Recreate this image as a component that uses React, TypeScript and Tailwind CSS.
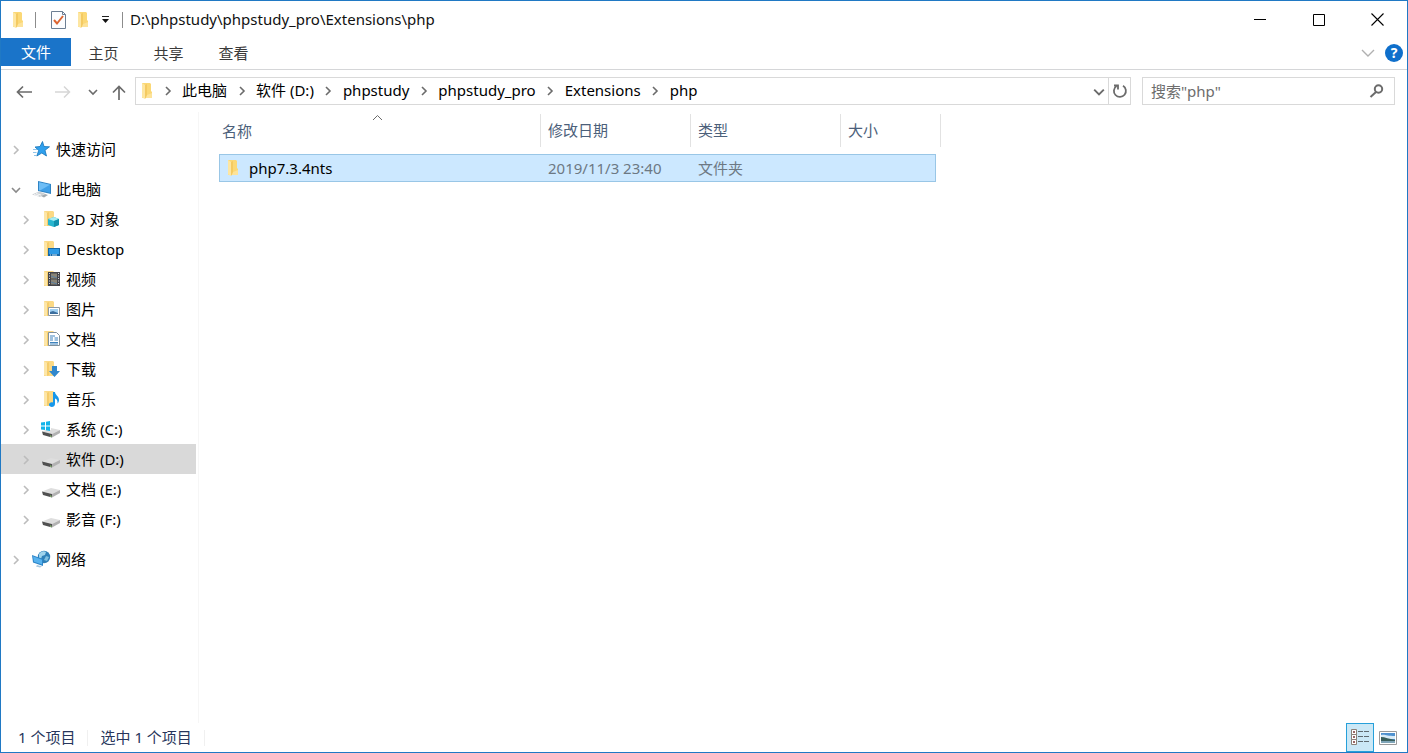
import { Fragment, useState } from "react";
import type { ReactNode } from "react";

type TreeItem = {
  id: string;
  label: string;
  icon: ReactNode;
  child?: boolean;
  open?: boolean;
  gapBefore?: boolean;
};

const Folder = () => (
  <svg width="12" height="16" viewBox="0 0 12 16" aria-hidden="true">
    <path d="M1 0h8l1 1v7l1 1v6H1z" fill="#fbd876" />
    <path d="M1 0l3 2v14l-3-1.500z" fill="#fde6a2" />
    <path d="M4 2l2-1v12l-2 3z" fill="#f4ca62" />
    <path d="M6 12l5-2v5H5z" fill="#fde39a" />
  </svg>
);

// Folder with a small picture over its lower right corner
const BadgeFolder = ({ children }: { children: ReactNode }) => (
  <svg width="18" height="18" viewBox="0 0 18 18" className="ml-0.5" aria-hidden="true">
    <path d="M1 1h9l1 1v14H1z" fill="#fbd985" />
    <path d="M1 1l3 2v13l-3-1z" fill="#fde6a8" />
    <path d="M4 3l2-1v13l-2 1z" fill="#f5cc6a" />
    {children}
  </svg>
);

const Chevron = ({ dir, color, size = 10 }: { dir: "right" | "down"; color: string; size?: number }) => {
  const paths = {
    right: "M3 1l4 4-4 4",
    down: "M1 3l4 4 4-4",
  };
  return (
    <svg width={size} height={size} viewBox="0 0 10 10" fill="none" stroke={color} strokeWidth="1.600" aria-hidden="true">
      <path d={paths[dir]} />
    </svg>
  );
};

const StarIcon = () => (
  <svg width="18" height="18" viewBox="0 0 18 18" className="ml-0.5" aria-hidden="true">
    <path d="M9.500 1.500l1.500 5 5.500.3-4.500 3.500 1.500 5.700-4.700-3-5 3 1.900-5.600L2 7l5-.5z" fill="#2fa0ee" stroke="#1673b8" strokeWidth=".8" />
    <path d="M0 9.500h4M0 12.500h3.500M1 15.500h2" stroke="#8ec4ea" strokeWidth="1" />
  </svg>
);

const ComputerIcon = () => (
  <svg width="20" height="18" viewBox="0 0 20 18" className="ml-px" aria-hidden="true">
    <path d="M6 1l13 3v10L6 11z" fill="#2e83c4" />
    <path d="M7 2.200l11 2.600v7.900L7 10.200z" fill="#3f9fe8" />
    <path d="M7 2.200l11 2.600L8 10.400l-1-.2z" fill="#6dbdf6" />
    <path d="M0 14.500l7-3 6 2-5 3.500z" fill="#ccd1d5" />
    <path d="M2 14.500l5 1.500M4 13.500l5 1.500" stroke="#fff" strokeWidth=".8" />
    <path d="M9 16l4-2 3 1-4 2.500z" fill="#a3abb1" />
  </svg>
);

const NetworkIcon = () => (
  <svg width="20" height="18" viewBox="0 0 20 18" aria-hidden="true">
    <circle cx="13" cy="7" r="6.200" fill="#2f80b8" />
    <path d="M8 4c2-3 5-3.500 7-2l-1 3-3 1-1 3-2-1z" fill="#9fd3ec" />
    <path d="M15 6l3 1-2 4-3-1z" fill="#7fbfe0" />
    <path d="M1 5l11 4v7L2 12.500z" fill="#2b84c8" />
    <path d="M2 6.300l9 3.400v4.900L3 11.700z" fill="#57b2ee" />
    <path d="M6 15l5 1.500-2 1-4-1z" fill="#a8c8de" />
  </svg>
);

const DriveIcon = ({ system }: { system?: boolean }) => (
  <svg width="20" height="18" viewBox="0 0 20 18" aria-hidden="true">
    <path d="M1 11.500l9-3.500 9 2-8 4z" fill="#dedede" />
    <path d="M1 11.500l10 2.500v3.500L2 15z" fill="#505050" />
    <path d="M11 14l8-4v3l-8 4.500z" fill="#b2b2b2" />
    <path d="M9 16l1.500.3" stroke="#9be37c" strokeWidth="1" />
    {system && (
      <>
        <path d="M0 1h10v9H0z" fill="#fff" />
        <path d="M0 2.500l4-.6v3.600H0zM5 1.700L9 1v4.500H5zM0 6.500h4v3.600l-4-.6zM5 6.500h4V11l-4-.7z" fill="#14b4ea" />
      </>
    )}
  </svg>
);

const ThreeDIcon = () => (
  <BadgeFolder>
    <path d="M5 9l6-2 5 2v6l-5 2-6-2z" fill="#27b5cf" />
    <path d="M5 9l6-2 5 2-5 2z" fill="#a8ecf3" />
    <path d="M11 11l5-2v6l-5 2z" fill="#1190ad" />
  </BadgeFolder>
);

const DesktopIcon = () => (
  <BadgeFolder>
    <path d="M5 8h12v8H5z" fill="#1769a8" />
    <path d="M6 9h10v5H6z" fill="#2d9ae6" />
    <path d="M7 15h1M9 15h5" stroke="#d5ecfb" />
  </BadgeFolder>
);

const VideoIcon = () => (
  <BadgeFolder>
    <path d="M5 2h12v14H5z" fill="#45454b" />
    <path d="M6.500 3v12M15.500 3v12" stroke="#d8d8d8" strokeWidth="1" strokeDasharray="1 1.500" />
    <path d="M8 3.500h6v5H8zM8 9.500h6v5H8z" fill="#8a8577" />
    <path d="M8 6l6 2M8 12l6 2" stroke="#5b7fa0" />
  </BadgeFolder>
);

const PictureIcon = () => (
  <BadgeFolder>
    <path d="M5.500 7.500h11v8h-11z" fill="#fff" stroke="#8f9aa3" />
    <path d="M7 9h8v5H7z" fill="#9fd0f2" />
    <path d="M7 12l3-1 5 2v1H7z" fill="#3c6e9e" />
  </BadgeFolder>
);

const DocumentIcon = () => (
  <BadgeFolder>
    <path d="M5.500 2.500h8l3 3v10h-11z" fill="#fff" stroke="#81919c" />
    <path d="M7 6h5M7 8h3M11.500 8H15M7 10h3M11.500 10H15M7 12.500h8M7 14h8" stroke="#3e83bd" />
  </BadgeFolder>
);

const DownloadIcon = () => (
  <BadgeFolder>
    <path d="M9 6h5v5h3l-5.500 6L6 11h3z" fill="#3187cc" />
  </BadgeFolder>
);

const MusicIcon = () => (
  <BadgeFolder>
    <path d="M10 2h2c0 3 4 4 4 8 0 1.500-.6 2.500-1.500 3.500.3-3-.8-4.500-2.500-5v5.500c0 4-6 3.500-6 .8 0-2 2-3 4-2.300z" fill="#1697ea" />
  </BadgeFolder>
);

const treeItems: TreeItem[] = [
  { id: "quick", label: "快速访问", icon: <StarIcon /> },
  { id: "pc", label: "此电脑", icon: <ComputerIcon />, open: true, gapBefore: true },
  { id: "3d", label: "3D 对象", icon: <ThreeDIcon />, child: true },
  { id: "desktop", label: "Desktop", icon: <DesktopIcon />, child: true },
  { id: "videos", label: "视频", icon: <VideoIcon />, child: true },
  { id: "pictures", label: "图片", icon: <PictureIcon />, child: true },
  { id: "documents", label: "文档", icon: <DocumentIcon />, child: true },
  { id: "downloads", label: "下载", icon: <DownloadIcon />, child: true },
  { id: "music", label: "音乐", icon: <MusicIcon />, child: true },
  { id: "c", label: "系统 (C:)", icon: <DriveIcon system />, child: true },
  { id: "d", label: "软件 (D:)", icon: <DriveIcon />, child: true },
  { id: "e", label: "文档 (E:)", icon: <DriveIcon />, child: true },
  { id: "f", label: "影音 (F:)", icon: <DriveIcon />, child: true },
  { id: "network", label: "网络", icon: <NetworkIcon />, gapBefore: true },
];

const crumbs = ["此电脑", "软件 (D:)", "phpstudy", "phpstudy_pro", "Extensions", "php"];

const TitleBar = () => (
  <header className="flex h-[37px] shrink-0 items-center">
    <div className="flex items-center pl-[11px]">
      <Folder />
      <span className="ml-[11px] h-4 w-px bg-[#8c8c8c]" />
      <button type="button" aria-label="属性" className="ml-[15px]">
        <svg width="15" height="18" viewBox="0 0 15 18" aria-hidden="true">
          <path d="M.5.500h11l3 3v14H.5z" fill="#fcfdff" stroke="#6d7f94" />
          <path d="M11.500.500v3h3" fill="none" stroke="#6d7f94" />
          <path d="M3 9l3 3.500L12 5" fill="none" stroke="#dc6532" strokeWidth="2" />
        </svg>
      </button>
      <button type="button" aria-label="新建文件夹" className="ml-[11px]">
        <Folder />
      </button>
      <button type="button" aria-label="自定义快速访问工具栏" className="ml-3">
        <svg width="9" height="8" viewBox="0 0 9 8" aria-hidden="true">
          <path d="M1 .500h7" stroke="#222" />
          <path d="M1 3h7L4.500 7z" fill="#111" />
        </svg>
      </button>
      <span className="ml-3 h-4 w-px bg-[#8c8c8c]" />
    </div>
    <h1 className="ml-[7px] flex-1 truncate pb-0.5 leading-6">D:\phpstudy\phpstudy_pro\Extensions\php</h1>
    <div className="flex h-full">
      <button type="button" aria-label="最小化" className="flex w-[59px] items-center justify-center">
        <svg width="12" height="12" viewBox="0 0 12 12" aria-hidden="true">
          <path d="M0 5.500h12" stroke="#000" />
        </svg>
      </button>
      <button type="button" aria-label="最大化" className="flex w-[59px] items-center justify-center">
        <svg width="12" height="12" viewBox="0 0 12 12" aria-hidden="true">
          <path d="M.5.500h11v11H.5z" fill="none" stroke="#000" />
        </svg>
      </button>
      <button type="button" aria-label="关闭" className="flex w-[59px] items-center justify-center">
        <svg width="13" height="13" viewBox="0 0 13 13" aria-hidden="true">
          <path d="M.5.500l12 12M12.500.500l-12 12" stroke="#000" strokeWidth="1.100" />
        </svg>
      </button>
    </div>
  </header>
);

const RibbonTabs = () => (
  <div className="flex h-8 shrink-0 items-start border-b border-[#d5d6d8] text-[#3a3a3a]">
    <button type="button" className="h-7 w-[70px] bg-[#1a74c9] text-white">
      文件
    </button>
    {["主页", "共享", "查看"].map((tab) => (
      <button key={tab} type="button" className="h-[30px] w-[65px]">
        {tab}
      </button>
    ))}
    <div className="ml-auto flex h-[30px] items-center gap-2.5 pr-1">
      <button type="button" aria-label="展开功能区">
        <svg width="14" height="8" viewBox="0 0 14 8" fill="none" stroke="#b0b0b0" strokeWidth="1.400" aria-hidden="true">
          <path d="M1 1l6 6 6-6" />
        </svg>
      </button>
      <button
        type="button"
        aria-label="帮助"
        className="flex size-[18px] items-center justify-center rounded-full bg-[#0f6fcb] text-sm font-bold leading-4 text-white"
      >
        ?
      </button>
    </div>
  </div>
);

const AddressRow = () => (
  <div className="flex h-[42px] shrink-0 items-center pr-3">
    <div className="flex w-[134px] items-center pl-[15px] pt-0.5">
      <button type="button" aria-label="后退">
        <svg width="16" height="14" viewBox="0 0 16 14" fill="none" stroke="#6b6b6b" strokeWidth="1.700" aria-hidden="true">
          <path d="M16 7H1.500M7 1.500L1.500 7 7 12.500" />
        </svg>
      </button>
      <button type="button" aria-label="前进" className="ml-[23px]" disabled>
        <svg width="16" height="14" viewBox="0 0 16 14" fill="none" stroke="#d6d6d6" strokeWidth="1.500" aria-hidden="true">
          <path d="M0 7h14.500M9 1.500L14.500 7 9 12.500" />
        </svg>
      </button>
      <button type="button" aria-label="最近浏览的位置" className="ml-[17px]">
        <Chevron dir="down" color="#6b6b6b" />
      </button>
      <button type="button" aria-label="上移" className="ml-3.5">
        <svg width="14" height="15" viewBox="0 0 14 15" fill="none" stroke="#6b6b6b" strokeWidth="1.700" aria-hidden="true">
          <path d="M7 15V1.500M1 7.500l6-6 6 6" />
        </svg>
      </button>
    </div>
    <div className="flex h-7 flex-1 items-center border border-[#d9d9d9]">
      <nav aria-label="地址" className="flex flex-1 items-center pl-[5px]">
        <Folder />
        {crumbs.map((crumb) => (
          <Fragment key={crumb}>
            <span className="flex w-[29px] justify-center">
              <Chevron dir="right" color="#6b6b6b" />
            </span>
            <a href="#" className="pb-0.5 leading-6 text-black">
              {crumb}
            </a>
          </Fragment>
        ))}
      </nav>
      <button type="button" aria-label="以前的位置" className="px-[3px] pt-0.5">
        <Chevron dir="down" color="#6b6b6b" size={12} />
      </button>
      <button type="button" aria-label="刷新" className="flex h-full w-[22px] items-center justify-center border-l border-[#d9d9d9]">
        <svg width="16" height="16" viewBox="0 0 16 16" fill="none" stroke="#6b6b6b" strokeWidth="1.800" aria-hidden="true">
          <path d="M11 2.800A6 6 0 1 1 4.500 3" />
          <path d="M2 2.500h4v4" />
        </svg>
      </button>
    </div>
    <label className="ml-[11px] flex h-7 w-[253px] items-center border border-[#d9d9d9] pl-2 pr-2.5">
      <input
        type="text"
        aria-label="搜索"
        placeholder={'搜索"php"'}
        className="min-w-0 flex-1 leading-6 outline-none placeholder:text-[#6d6d6d]"
      />
      <svg width="15" height="14" viewBox="0 0 15 14" fill="none" stroke="#6b6b6b" strokeWidth="2" aria-hidden="true">
        <circle cx="9.500" cy="5" r="3.700" />
        <path d="M7 8l-5.500 5" />
      </svg>
    </label>
  </div>
);

const Sidebar = () => {
  const [selected, setSelected] = useState("d");

  return (
    <nav aria-label="导航窗格" className="w-[198px] shrink-0 border-r border-[#f6f6f6] pt-[22px] text-black">
      <ul className="pr-0.5">
        {treeItems.map((item) => (
          <li key={item.id} className={item.gapBefore ? "mt-2.5" : ""}>
            <button
              type="button"
              onClick={() => setSelected(item.id)}
              className={`flex h-[30px] w-full items-center text-left ${item.child ? "pl-5" : "pl-2.5"} ${
                selected === item.id ? "bg-[#d9d9d9]" : ""
              }`}
            >
              <span className="pt-0.5">
                {item.open ? <Chevron dir="down" color="#8a8a8a" /> : <Chevron dir="right" color="#bcbcbc" />}
              </span>
              <span className="ml-2.5 flex w-[25px] items-center">{item.icon}</span>
              <span className="leading-6">{item.label}</span>
            </button>
          </li>
        ))}
      </ul>
    </nav>
  );
};

const FileList = () => (
  <main className="min-w-0 flex-1 pl-5 pt-0.5">
    <table className="w-[717px] table-fixed border-separate border-spacing-0 text-left">
      <thead className="text-[#4c607a]">
        <tr className="h-[33px]">
          <th scope="col" aria-sort="ascending" className="relative w-[322px] border-r border-[#e2e2e2] p-0 pl-[3px] font-normal leading-8">
            名称
            <span className="absolute left-[153px] top-0 flex">
              <svg width="11" height="7" viewBox="0 0 11 7" fill="none" stroke="#6b6b6b" aria-hidden="true">
                <path d="M1 6l4.500-4.500L10 6" />
              </svg>
            </span>
          </th>
          <th scope="col" className="w-[150px] border-r border-[#e2e2e2] p-0 pb-px pl-[7px] font-normal leading-8">修改日期</th>
          <th scope="col" className="w-[150px] border-r border-[#e2e2e2] p-0 pb-px pl-[7px] font-normal leading-8">类型</th>
          <th scope="col" className="p-0 font-normal">
            <div className="-mr-[5px] h-[33px] border-r border-[#e2e2e2] pl-[7px] leading-8">大小</div>
          </th>
        </tr>
      </thead>
      <tbody>
        <tr aria-hidden="true">
          <td colSpan={4} className="h-[7px] p-0" />
        </tr>
        <tr className="h-7 bg-[#cce8ff] text-[#6d7883]">
          <td className="border-y border-l border-[#99c6e6] p-0 text-black">
            <div className="flex items-center pl-[7px]">
              <Folder />
              <span className="ml-2.5 leading-6">php7.3.4nts</span>
            </div>
          </td>
          <td className="border-y border-[#99c6e6] p-0 pl-[7px] leading-6">2019/11/3 23:40</td>
          <td className="border-y border-[#99c6e6] p-0 pl-[7px] leading-6">文件夹</td>
          <td className="border-y border-r border-[#99c6e6] p-0" />
        </tr>
      </tbody>
    </table>
  </main>
);

const StatusBar = () => (
  <footer className="flex h-[29px] shrink-0 items-center pl-[17px] pr-2.5 text-[#27365c]">
    <span className="pb-0.5 leading-6">1 个项目</span>
    <span className="mx-3 h-4 w-px bg-[#f0f0f0]" />
    <span className="pb-0.5 leading-6">选中 1 个项目</span>
    <span className="mx-3 h-4 w-px bg-[#f0f0f0]" />
    <div className="ml-auto flex h-full items-center">
      <button
        type="button"
        aria-label="详细信息"
        aria-pressed="true"
        className="flex h-full w-7 items-center justify-center border border-[#26a0da] bg-[#cbe8f6]"
      >
        <svg width="19" height="17" viewBox="0 0 19 17" aria-hidden="true">
          <path d="M.5.500h5v5h-5zM.5 5.500h5v5h-5zM.5 10.500h5v5h-5z" fill="#fff" stroke="#8b8178" />
          <path d="M2 3h2M2 8h2M2 13h2" stroke="#7a3434" strokeWidth="1.500" />
          <path d="M7 2.500h5M13 2.500h5M7 7.500h5M13 7.500h5M7 12.500h5M13 12.500h5" stroke="#5f6a70" />
        </svg>
      </button>
      <button type="button" aria-label="大缩略图" className="ml-[5px]">
        <svg width="18" height="14" viewBox="0 0 18 14" aria-hidden="true">
          <path d="M.5.500h17v13H.5z" fill="#fff" stroke="#9a9a9a" />
          <path d="M2 2h14v10H2z" fill="#4f91cf" />
          <path d="M2 4c4-1 6 1 14 1v3H2z" fill="#d8ebf7" />
          <path d="M2 6c4 0 8 2 14 3v3H2z" fill="#3a5f5b" />
          <path d="M2 10h14v2H2z" fill="#7fa5b8" />
        </svg>
      </button>
    </div>
  </footer>
);

export default function App() {
  return (
    <div className="flex h-screen flex-col overflow-hidden border border-[#2079c4] bg-white font-['Noto_Sans','Noto_Sans_CJK_SC',sans-serif] text-[15px] text-[#111]">
      <TitleBar />
      <RibbonTabs />
      <AddressRow />
      <div className="flex min-h-0 flex-1">
        <Sidebar />
        <FileList />
      </div>
      <StatusBar />
    </div>
  );
}
